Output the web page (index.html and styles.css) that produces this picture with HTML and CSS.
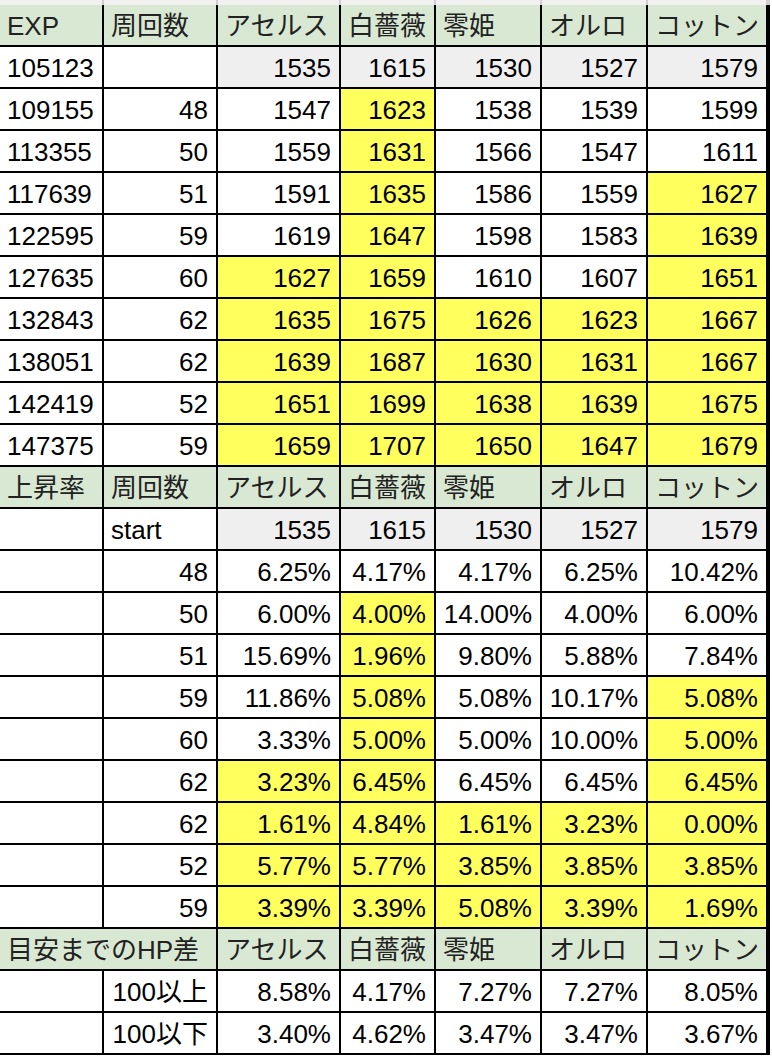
FILE: index.html
```html
<!DOCTYPE html>
<html lang="ja">
<head>
<meta charset="utf-8">
<title>EXP</title>
<link rel="stylesheet" href="styles.css">
</head>
<body>
<div class="strip">
  <div></div><div></div><div></div><div></div><div></div><div></div><div></div>
</div>
<div class="sheet">
  <div class="c h">EXP</div><div class="c h">周回数</div><div class="c h">アセルス</div><div class="c h">白薔薇</div><div class="c h">零姫</div><div class="c h">オルロ</div><div class="c h">コットン</div>

  <div class="c">105123</div><div class="c"></div><div class="c r g">1535</div><div class="c r g">1615</div><div class="c r g">1530</div><div class="c r g">1527</div><div class="c r g">1579</div>
  <div class="c">109155</div><div class="c r">48</div><div class="c r">1547</div><div class="c r y">1623</div><div class="c r">1538</div><div class="c r">1539</div><div class="c r">1599</div>
  <div class="c">113355</div><div class="c r">50</div><div class="c r">1559</div><div class="c r y">1631</div><div class="c r">1566</div><div class="c r">1547</div><div class="c r">1611</div>
  <div class="c">117639</div><div class="c r">51</div><div class="c r">1591</div><div class="c r y">1635</div><div class="c r">1586</div><div class="c r">1559</div><div class="c r y">1627</div>
  <div class="c">122595</div><div class="c r">59</div><div class="c r">1619</div><div class="c r y">1647</div><div class="c r">1598</div><div class="c r">1583</div><div class="c r y">1639</div>
  <div class="c">127635</div><div class="c r">60</div><div class="c r y">1627</div><div class="c r y">1659</div><div class="c r">1610</div><div class="c r">1607</div><div class="c r y">1651</div>
  <div class="c">132843</div><div class="c r">62</div><div class="c r y">1635</div><div class="c r y">1675</div><div class="c r y">1626</div><div class="c r y">1623</div><div class="c r y">1667</div>
  <div class="c">138051</div><div class="c r">62</div><div class="c r y">1639</div><div class="c r y">1687</div><div class="c r y">1630</div><div class="c r y">1631</div><div class="c r y">1667</div>
  <div class="c">142419</div><div class="c r">52</div><div class="c r y">1651</div><div class="c r y">1699</div><div class="c r y">1638</div><div class="c r y">1639</div><div class="c r y">1675</div>
  <div class="c">147375</div><div class="c r">59</div><div class="c r y">1659</div><div class="c r y">1707</div><div class="c r y">1650</div><div class="c r y">1647</div><div class="c r y">1679</div>

  <div class="c h">上昇率</div><div class="c h">周回数</div><div class="c h">アセルス</div><div class="c h">白薔薇</div><div class="c h">零姫</div><div class="c h">オルロ</div><div class="c h">コットン</div>

  <div class="c"></div><div class="c">start</div><div class="c r g">1535</div><div class="c r g">1615</div><div class="c r g">1530</div><div class="c r g">1527</div><div class="c r g">1579</div>
  <div class="c"></div><div class="c r">48</div><div class="c r">6.25%</div><div class="c r">4.17%</div><div class="c r">4.17%</div><div class="c r">6.25%</div><div class="c r">10.42%</div>
  <div class="c"></div><div class="c r">50</div><div class="c r">6.00%</div><div class="c r y">4.00%</div><div class="c r">14.00%</div><div class="c r">4.00%</div><div class="c r">6.00%</div>
  <div class="c"></div><div class="c r">51</div><div class="c r">15.69%</div><div class="c r y">1.96%</div><div class="c r">9.80%</div><div class="c r">5.88%</div><div class="c r">7.84%</div>
  <div class="c"></div><div class="c r">59</div><div class="c r">11.86%</div><div class="c r y">5.08%</div><div class="c r">5.08%</div><div class="c r">10.17%</div><div class="c r y">5.08%</div>
  <div class="c"></div><div class="c r">60</div><div class="c r">3.33%</div><div class="c r y">5.00%</div><div class="c r">5.00%</div><div class="c r">10.00%</div><div class="c r y">5.00%</div>
  <div class="c"></div><div class="c r">62</div><div class="c r y">3.23%</div><div class="c r y">6.45%</div><div class="c r">6.45%</div><div class="c r">6.45%</div><div class="c r y">6.45%</div>
  <div class="c"></div><div class="c r">62</div><div class="c r y">1.61%</div><div class="c r y">4.84%</div><div class="c r y">1.61%</div><div class="c r y">3.23%</div><div class="c r y">0.00%</div>
  <div class="c"></div><div class="c r">52</div><div class="c r y">5.77%</div><div class="c r y">5.77%</div><div class="c r y">3.85%</div><div class="c r y">3.85%</div><div class="c r y">3.85%</div>
  <div class="c"></div><div class="c r">59</div><div class="c r y">3.39%</div><div class="c r y">3.39%</div><div class="c r y">5.08%</div><div class="c r y">3.39%</div><div class="c r y">1.69%</div>

  <div class="c h span2">目安までのHP差</div><div class="c h">アセルス</div><div class="c h">白薔薇</div><div class="c h">零姫</div><div class="c h">オルロ</div><div class="c h">コットン</div>

  <div class="c"></div><div class="c r">100以上</div><div class="c r">8.58%</div><div class="c r">4.17%</div><div class="c r">7.27%</div><div class="c r">7.27%</div><div class="c r">8.05%</div>
  <div class="c"></div><div class="c r">100以下</div><div class="c r">3.40%</div><div class="c r">4.62%</div><div class="c r">3.47%</div><div class="c r">3.47%</div><div class="c r">3.67%</div>
</div>
</body>
</html>
```

FILE: styles.css
```css
html, body {
  margin: 0;
  padding: 0;
  background: #ffffff;
}

body {
  width: 772px;
  font-family: "Liberation Sans", "Noto Sans CJK JP", sans-serif;
  font-size: 26px;
  color: #000000;
}

.strip {
  display: grid;
  grid-template-columns: 102px 112px 121px 93px 104px 104px 118px;
  column-gap: 2px;
  padding-right: 2px;
  width: 768px;
  height: 5px;
  background: #cfcfcf;
}

.strip div {
  background: #f1f1f1;
}

.sheet {
  display: grid;
  grid-template-columns: 102px 112px 121px 93px 104px 104px 118px;
  grid-auto-rows: 40px;
  gap: 2px;
  padding-right: 2px;
  padding-bottom: 2px;
  width: 768px;
  background: #000000;
}

.c {
  box-sizing: border-box;
  height: 40px;
  padding: 2px 8px 0 7px;
  line-height: 38px;
  white-space: nowrap;
  overflow: hidden;
  background: #ffffff;
}

.r {
  text-align: right;
}

.h {
  background: #d9e8d3;
  color: #222222;
}

.g {
  background: #efefef;
}

.y {
  background: #ffff5e;
}

.span2 {
  grid-column: span 2;
}
```
